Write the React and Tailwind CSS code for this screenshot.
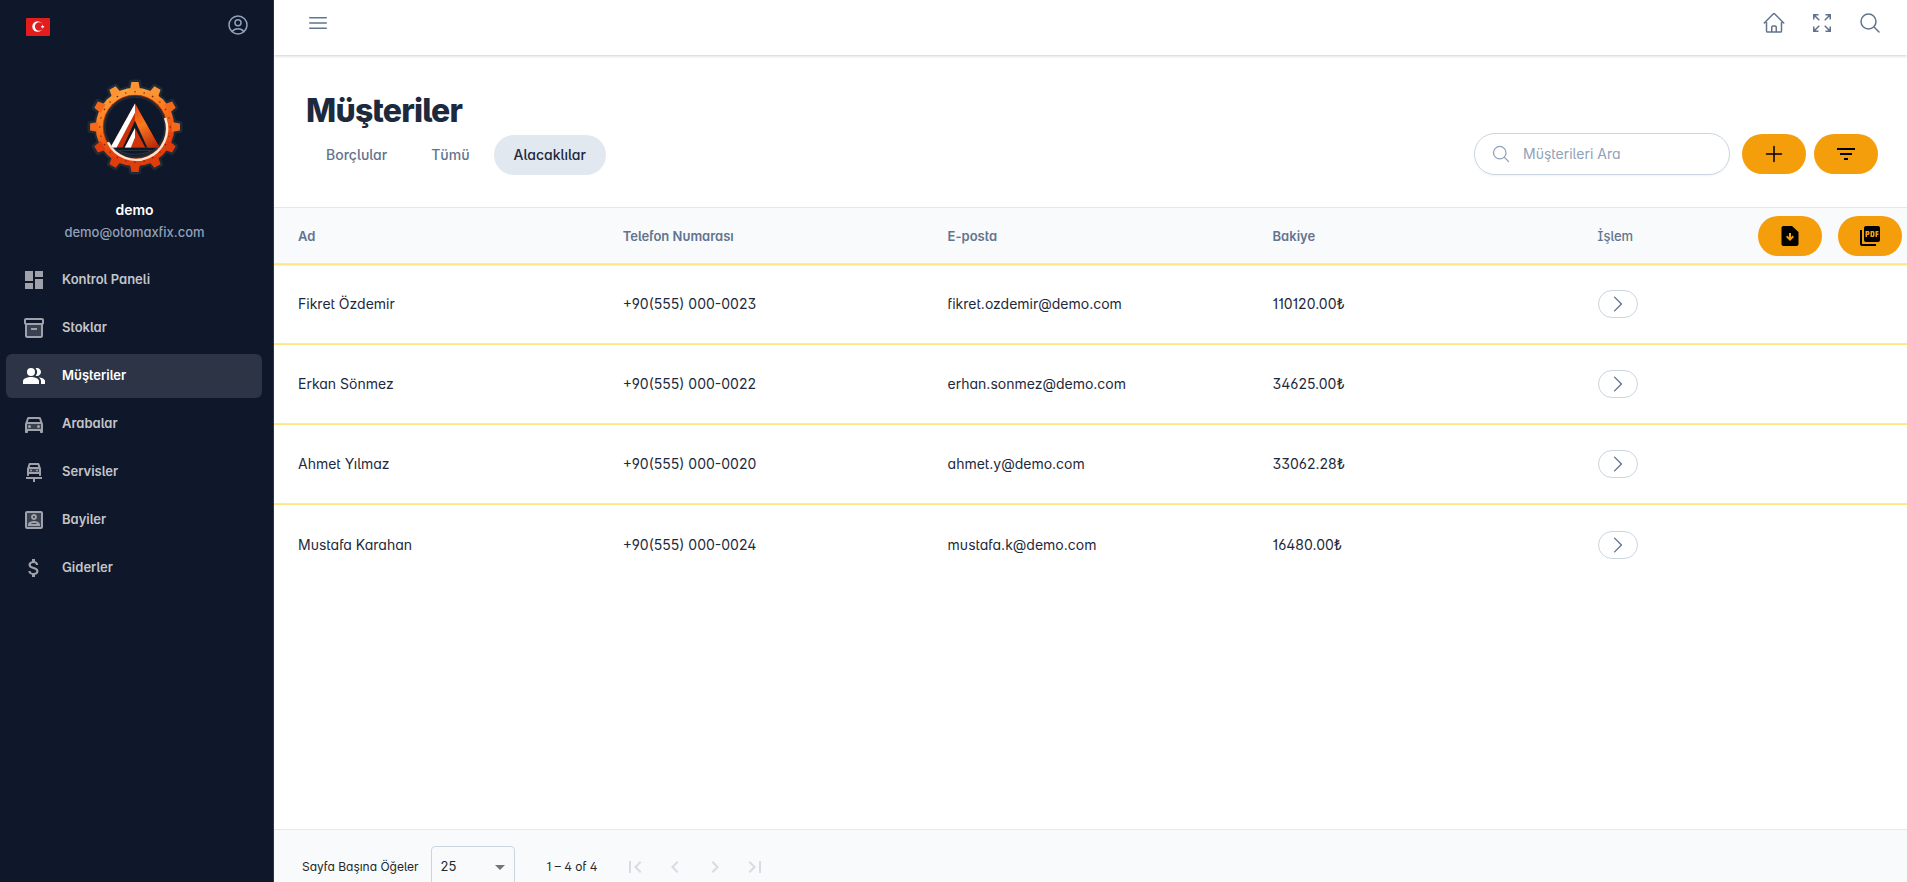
import React, { useState } from 'react';
import {
  MdDashboard,
  MdOutlineInventory2,
  MdPeopleAlt,
  MdOutlineDirectionsCar,
  MdOutlineCarRepair,
  MdOutlinePortrait,
  MdAttachMoney,
  MdFilterList,
  MdPictureAsPdf,
  MdFirstPage,
  MdChevronLeft,
  MdChevronRight,
  MdLastPage,
  MdArrowDropDown,
} from 'react-icons/md';
import {
  HiOutlineBars3,
  HiOutlineHome,
  HiOutlineMagnifyingGlass,
  HiOutlineUserCircle,
  HiOutlinePlus,
  HiOutlineChevronRight,
} from 'react-icons/hi2';

const navItems = [
  { label: 'Kontrol Paneli', icon: MdDashboard },
  { label: 'Stoklar', icon: MdOutlineInventory2, tone: 'M5 8h14v12H5z' },
  { label: 'Müşteriler', icon: MdPeopleAlt, active: true },
  { label: 'Arabalar', icon: MdOutlineDirectionsCar, tone: 'M5 12h14v5H5z' },
  { label: 'Servisler', icon: MdOutlineCarRepair, tone: 'M7 8h10v4H7z' },
  { label: 'Bayiler', icon: MdOutlinePortrait, tone: 'M5 5h14v14H5z' },
  { label: 'Giderler', icon: MdAttachMoney },
];

const customers = [
  { name: 'Fikret Özdemir', phone: '+90(555) 000-0023', email: 'fikret.ozdemir@demo.com', balance: '110120.00₺' },
  { name: 'Erkan Sönmez', phone: '+90(555) 000-0022', email: 'erhan.sonmez@demo.com', balance: '34625.00₺' },
  { name: 'Ahmet Yılmaz', phone: '+90(555) 000-0020', email: 'ahmet.y@demo.com', balance: '33062.28₺' },
  { name: 'Mustafa Karahan', phone: '+90(555) 000-0024', email: 'mustafa.k@demo.com', balance: '16480.00₺' },
];

const Flag = () => (
  <svg viewBox="0 0 24 18" className="w-6 h-[18px]">
    <rect width="24" height="18" rx="1" fill="#e31d1c" />
    <circle cx="11.6" cy="8.5" r="5.3" fill="#fff" />
    <circle cx="13.1" cy="8.5" r="4.2" fill="#e31d1c" />
    <path d="M16.6 6.6l.5 1.3 1.4.1-1.1.9.4 1.4-1.2-.8-1.2.8.4-1.4-1.1-.9 1.4-.1z" fill="#fff" />
  </svg>
);

const teeth = [0, 30, 60, 90, 120, 150, 180, 210, 240, 270, 300, 330];

const GearLogo = () => (
  <svg viewBox="1 1 94 94" className="w-24 h-24">
    <defs>
      <linearGradient id="gear" x1="30" y1="4" x2="56" y2="92" gradientUnits="userSpaceOnUse">
        <stop offset="0" stopColor="#ffae45" />
        <stop offset="0.4" stopColor="#fb7a1e" />
        <stop offset="0.7" stopColor="#e8420f" />
        <stop offset="1" stopColor="#d93a0b" />
      </linearGradient>
      <linearGradient id="peak" x1="48" y1="26" x2="68" y2="68" gradientUnits="userSpaceOnUse">
        <stop offset="0" stopColor="#e8420f" />
        <stop offset="0.45" stopColor="#fb7a1e" />
        <stop offset="1" stopColor="#b92708" />
      </linearGradient>
    </defs>
    {/* dark rim behind the gear */}
    <g fill="#1e2b36" stroke="#1e2b36" strokeWidth="5" strokeLinejoin="round">
      <circle cx="48" cy="48" r="38" />
      {teeth.map((a) => (
        <path key={a} d="M43.5 11 44.5 4h7l1 7z" transform={`rotate(${a} 48 48)`} />
      ))}
    </g>
    <g fill="url(#gear)">
      <circle cx="48" cy="48" r="38.5" />
      {teeth.map((a) => {
        const rad = (a * Math.PI) / 180;
        const fill = Math.cos(rad) > 0.6 ? '#fd9434' : Math.cos(rad) > -0.2 ? '#f6691b' : '#e03c0c';
        return <path key={a} d="M43 12 44.5 4h7l1.5 8z" fill={fill} transform={`rotate(${a} 48 48)`} />;
      })}
    </g>
    <g fill="#7a2508">
      {teeth.map((a) => (
        <React.Fragment key={a}>
          <circle cx="48" cy="13.5" r="0.8" transform={`rotate(${a} 48 48)`} />
          <circle cx="48" cy="13.5" r="0.7" transform={`rotate(${a + 15} 48 48)`} />
        </React.Fragment>
      ))}
    </g>
    <circle cx="48" cy="48" r="31.5" fill="#a32a08" />
    <circle cx="48" cy="48" r="29.5" fill="#0f172a" stroke="#1e2b36" strokeWidth="2" />
    <path d="M21.5 63a30.500 30.500 0 0 0 56-24" fill="none" stroke="#fde3cb" strokeWidth="2.4" />
    <path d="M48 25 72 68H24z" fill="#c93208" />
    <path d="M48 25v9L30 68h-6z" fill="#fff" />
    <path d="M48 25 72 68H60L48 44z" fill="url(#peak)" />
    <path d="M48 42 60 68H36z" fill="#0f172a" />
    <path d="M48 49 58 68H38z" fill="#cf3509" />
    <path d="M48 49v9l-4 10h-6z" fill="#fff" />
    <path d="M32 71h32c-8 5-24 5-32 0z" fill="none" stroke="#25343f" strokeWidth="1" />
  </svg>
);

const ExpandIcon = () => (
  <svg viewBox="0 0 24 24" fill="none" stroke="currentColor" strokeWidth="1.5" className="w-6 h-6">
    <path d="M3.750 8.500V3.750H8.500M3.750 3.750l5.500 5.500M15.500 3.750h4.750V8.500M20.250 3.750l-5.500 5.500M3.750 15.500v4.750H8.500M3.750 20.250l5.500-5.500M20.250 15.500v4.750H15.500M20.250 20.250l-5.500-5.500" />
    <path d="M3.750 3.750h3l-3 3zM20.250 3.750h-3l3 3zM3.750 20.250h3l-3-3zM20.250 20.250h-3l3-3z" fill="currentColor" stroke="none" />
  </svg>
);

const FileDownloadIcon = () => (
  <svg viewBox="0 0 24 24" fill="currentColor" className="w-6 h-6">
    <path d="M5.500 2H14l6.500 6v12c0 1.100-.9 2-2 2h-13c-1.100 0-2-.9-2-2V4c0-1.100.9-2 2-2zM12 17l4-4-1.400-1.400L13 13.200V9h-2v4.200l-1.600-1.600L8 13z" />
  </svg>
);

const NavItem = ({ item }) => (
  <a
    href="#"
    className={`flex items-center h-11 rounded-md px-4 gap-4 text-[13px] font-semibold ${
      item.active ? 'bg-[#2d3446] text-white' : 'text-[#c3c5ca]'
    }`}
  >
    <span className={`relative w-6 h-6 ${item.active ? 'text-white' : 'text-[#9fa2aa]'}`}>
      {item.tone && (
        <svg viewBox="0 0 24 24" className="absolute inset-0 w-6 h-6 opacity-30">
          <path d={item.tone} fill="currentColor" />
        </svg>
      )}
      <item.icon className="w-6 h-6" />
    </span>
    {item.label}
  </a>
);

const Sidebar = () => (
  <aside className="w-[274px] shrink-0 bg-[#0f172a] border-r border-[#2d3446]">
    <div className="flex items-center justify-between h-[50px] pl-[26px] pr-[23px]">
      <button aria-label="Dil" className="pt-1">
        <Flag />
      </button>
      <button aria-label="Profil" className="text-slate-400">
        <HiOutlineUserCircle className="w-6 h-6" />
      </button>
    </div>
    <div className="flex flex-col items-center pt-[29px] pr-1">
      <GearLogo />
      <div className="mt-[25px] text-sm leading-5 font-semibold text-white">demo</div>
      <div className="text-[13px] leading-6 font-medium text-slate-400">demo@otomaxfix.com</div>
    </div>
    <nav className="flex flex-col gap-1 mt-3.5 pl-1.5 pr-[11px]">
      {navItems.map((item) => (
        <NavItem key={item.label} item={item} />
      ))}
    </nav>
  </aside>
);

const Topbar = () => (
  <header className="flex items-center justify-between h-[55px] shrink-0 pl-8 pr-[25px] pb-[9px] text-slate-500 bg-white shadow-[0_1px_3px_rgba(0,0,0,0.2)]">
    <button aria-label="Menü">
      <HiOutlineBars3 className="w-6 h-6" />
    </button>
    <div className="flex items-center gap-6">
      <button aria-label="Ana sayfa">
        <HiOutlineHome className="w-6 h-6" />
      </button>
      <button aria-label="Tam ekran">
        <ExpandIcon />
      </button>
      <button aria-label="Ara">
        <HiOutlineMagnifyingGlass className="w-6 h-6" />
      </button>
    </div>
  </header>
);

const PillButton = ({ label, children }) => (
  <button
    aria-label={label}
    className="flex items-center justify-center w-16 h-10 rounded-full bg-[#f59e0b] text-black"
  >
    {children}
  </button>
);

const tabs = ['Borçlular', 'Tümü', 'Alacaklılar'];

const PageHeader = () => {
  const [tab, setTab] = useState('Alacaklılar');

  return (
    <div className="flex items-end justify-between h-[152px] shrink-0 pl-8 pr-[29px] pb-8">
      <div>
        <h1 className="text-[32px] leading-12 font-extrabold tracking-tight text-slate-800">Müşteriler</h1>
        <div className="flex gap-1">
          {tabs.map((name) => (
            <button
              key={name}
              onClick={() => setTab(name)}
              className={`h-10 px-5 rounded-full text-sm font-medium ${
                tab === name ? 'bg-slate-200 text-slate-800' : 'text-slate-500'
              }`}
            >
              {name}
            </button>
          ))}
        </div>
      </div>
      <div className="flex items-center">
        <label className="flex items-center w-64 h-[42px] px-4 gap-3 mr-3 rounded-full border border-slate-300 text-slate-400 shadow-xs">
          <HiOutlineMagnifyingGlass className="w-5 h-5 shrink-0" />
          <input
            type="text"
            aria-label="Müşterileri Ara"
            placeholder="Müşterileri Ara"
            className="w-full text-sm outline-none placeholder:text-slate-400"
          />
        </label>
        <div className="flex gap-2">
          <PillButton label="Ekle">
            <HiOutlinePlus className="w-6 h-6" />
          </PillButton>
          <PillButton label="Filtrele">
            <MdFilterList className="w-6 h-6" />
          </PillButton>
        </div>
      </div>
    </div>
  );
};

const CustomerTable = () => (
  <table className="w-full table-fixed border-separate border-spacing-0 text-left">
    <thead className="bg-slate-50 text-[13px] text-slate-500 shadow-[0_1px_2px_rgba(0,0,0,0.15)]">
      <tr className="h-[57px] *:border-y *:border-slate-200 *:font-semibold">
        <th className="w-[21.35%] pl-6 pt-0.5">Ad</th>
        <th className="w-[19.9%] pt-0.5">Telefon Numarası</th>
        <th className="w-[19.9%] pt-0.5">E-posta</th>
        <th className="w-[19.9%] pt-0.5">Bakiye</th>
        <th className="pt-0.5">
          <span className="font-medium">İşlem</span>
        </th>
        <th>
          <div className="flex justify-end gap-4 pr-[5px]">
            <PillButton label="İndir">
              <FileDownloadIcon />
            </PillButton>
            <PillButton label="PDF">
              <MdPictureAsPdf className="w-6 h-6" />
            </PillButton>
          </div>
        </th>
      </tr>
    </thead>
    <tbody className="text-sm text-slate-800">
      {customers.map((c) => (
        <tr key={c.phone} className="h-20 *:border-t *:border-b *:border-t-amber-200 *:border-b-slate-200 last:*:border-b-0">
          <td className="pl-6">{c.name}</td>
          <td>{c.phone}</td>
          <td>{c.email}</td>
          <td>{c.balance}</td>
          <td>
            <button
              aria-label="Detay"
              className="flex items-center justify-center w-10 h-7 rounded-full border border-slate-300 text-slate-500"
            >
              <HiOutlineChevronRight className="w-[22px] h-[22px]" />
            </button>
          </td>
          <td></td>
        </tr>
      ))}
    </tbody>
  </table>
);

const pagerButtons = [
  { label: 'İlk sayfa', icon: MdFirstPage },
  { label: 'Önceki sayfa', icon: MdChevronLeft },
  { label: 'Sonraki sayfa', icon: MdChevronRight },
  { label: 'Son sayfa', icon: MdLastPage },
];

const Paginator = () => (
  <footer className="h-[53px] shrink-0 overflow-hidden bg-slate-50 border-t border-slate-200 pl-7 pt-4 text-xs text-[#262626]">
    <div className="flex items-center h-[42px]">
      <label htmlFor="page-size">Sayfa Başına Öğeler</label>
      <div className="relative ml-3">
        <select
          id="page-size"
          defaultValue="25"
          className="appearance-none w-[84px] h-[42px] pl-[9px] rounded border border-slate-300 text-[13px]"
        >
          <option>10</option>
          <option>25</option>
          <option>50</option>
        </select>
        <MdArrowDropDown className="absolute right-[3px] top-[9px] w-6 h-6 text-[#737578] pointer-events-none" />
      </div>
      <span className="ml-8">1 – 4 of 4</span>
      <div className="flex gap-3 ml-[23px]">
        {pagerButtons.map((b) => (
          <button key={b.label} aria-label={b.label} disabled className="p-0.5 text-[#d9dbde]">
            <b.icon className="w-6 h-6" />
          </button>
        ))}
      </div>
    </div>
  </footer>
);

const App = () => (
  <div className="flex h-screen overflow-hidden bg-white font-[Inter,'Noto_Sans',sans-serif] [font-feature-settings:'salt']">
    <Sidebar />
    <div className="flex flex-col flex-1 min-w-0">
      <Topbar />
      <PageHeader />
      <main className="flex-1 overflow-hidden">
        <CustomerTable />
      </main>
      <Paginator />
    </div>
  </div>
);

export default App;
